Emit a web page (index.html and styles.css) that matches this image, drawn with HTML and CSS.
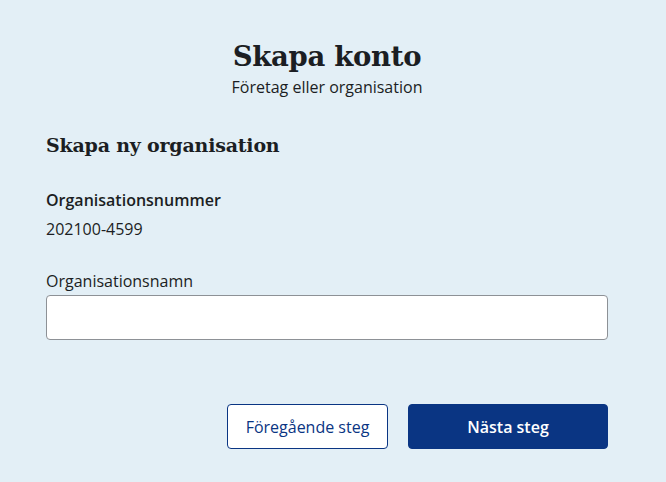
FILE: index.html
```html
<!DOCTYPE html>
<html lang="sv">
<head>
<meta charset="utf-8">
<title>Skapa konto</title>
<link rel="stylesheet" href="styles.css">
</head>
<body>
<main class="page">
  <header class="page-head">
    <h1 class="title">Skapa konto</h1>
    <p class="subtitle">Företag eller organisation</p>
  </header>
  <section class="form">
    <h2 class="section-title">Skapa ny organisation</h2>
    <div class="field-static">
      <div class="label-bold">Organisationsnummer</div>
      <div class="value">202100-4599</div>
    </div>
    <label class="field">
      <span class="label">Organisationsnamn</span>
      <input class="input" type="text">
    </label>
    <div class="actions">
      <button class="btn btn-secondary" type="button">Föregående steg</button>
      <button class="btn btn-primary" type="button">Nästa steg</button>
    </div>
  </section>
</main>
</body>
</html>
```

FILE: styles.css
```css
html, body {
  margin: 0;
  padding: 0;
}
body {
  background: #e3eff6;
  font-family: "Open Sans", "Noto Sans", sans-serif;
  color: #1b1e23;
  width: 666px;
  height: 482px;
  overflow: hidden;
}
.page {
  width: 562px;
  margin-left: 46px;
  padding-top: 38px;
}
.page-head {
  display: flex;
  flex-direction: column;
  align-items: center;
}
.title {
  margin: 0;
  font-family: "DejaVu Serif", serif;
  font-weight: bold;
  font-size: 27.5px;
  line-height: 36px;
  letter-spacing: -0.3px;
  color: #1b1e23;
}
.subtitle {
  margin: 2px 0 0;
  font-size: 16px;
  line-height: 22px;
}
.form {
  padding-top: 33px;
}
.section-title {
  margin: 0;
  font-family: "DejaVu Serif", serif;
  font-weight: bold;
  font-size: 19px;
  line-height: 28px;
  letter-spacing: -0.2px;
}
.field-static {
  margin-top: 30px;
  display: flex;
  flex-direction: column;
  gap: 7px;
}
.label-bold {
  font-weight: 600;
  font-size: 16px;
  line-height: 22px;
}
.value {
  font-size: 16px;
  line-height: 22px;
}
.field {
  margin-top: 30px;
  display: flex;
  flex-direction: column;
  gap: 3px;
}
.label {
  font-size: 16px;
  line-height: 22px;
}
.input {
  box-sizing: border-box;
  width: 562px;
  height: 45px;
  border: 1px solid #8d9196;
  border-radius: 4px;
  background: #fff;
  margin: 0;
  font: inherit;
}
.actions {
  margin-top: 64px;
  display: flex;
  justify-content: flex-end;
  gap: 20px;
}
.btn {
  box-sizing: border-box;
  height: 45px;
  border-radius: 4px;
  font-family: "Open Sans", "Noto Sans", sans-serif;
  font-size: 16px;
  padding: 0;
  cursor: pointer;
}
.btn-secondary {
  width: 161px;
  background: #fff;
  border: 1px solid #0a3583;
  color: #0a3583;
}
.btn-primary {
  width: 200px;
  background: #0a3583;
  border: 1px solid #0a3583;
  color: #fff;
  font-weight: 600;
}
```
